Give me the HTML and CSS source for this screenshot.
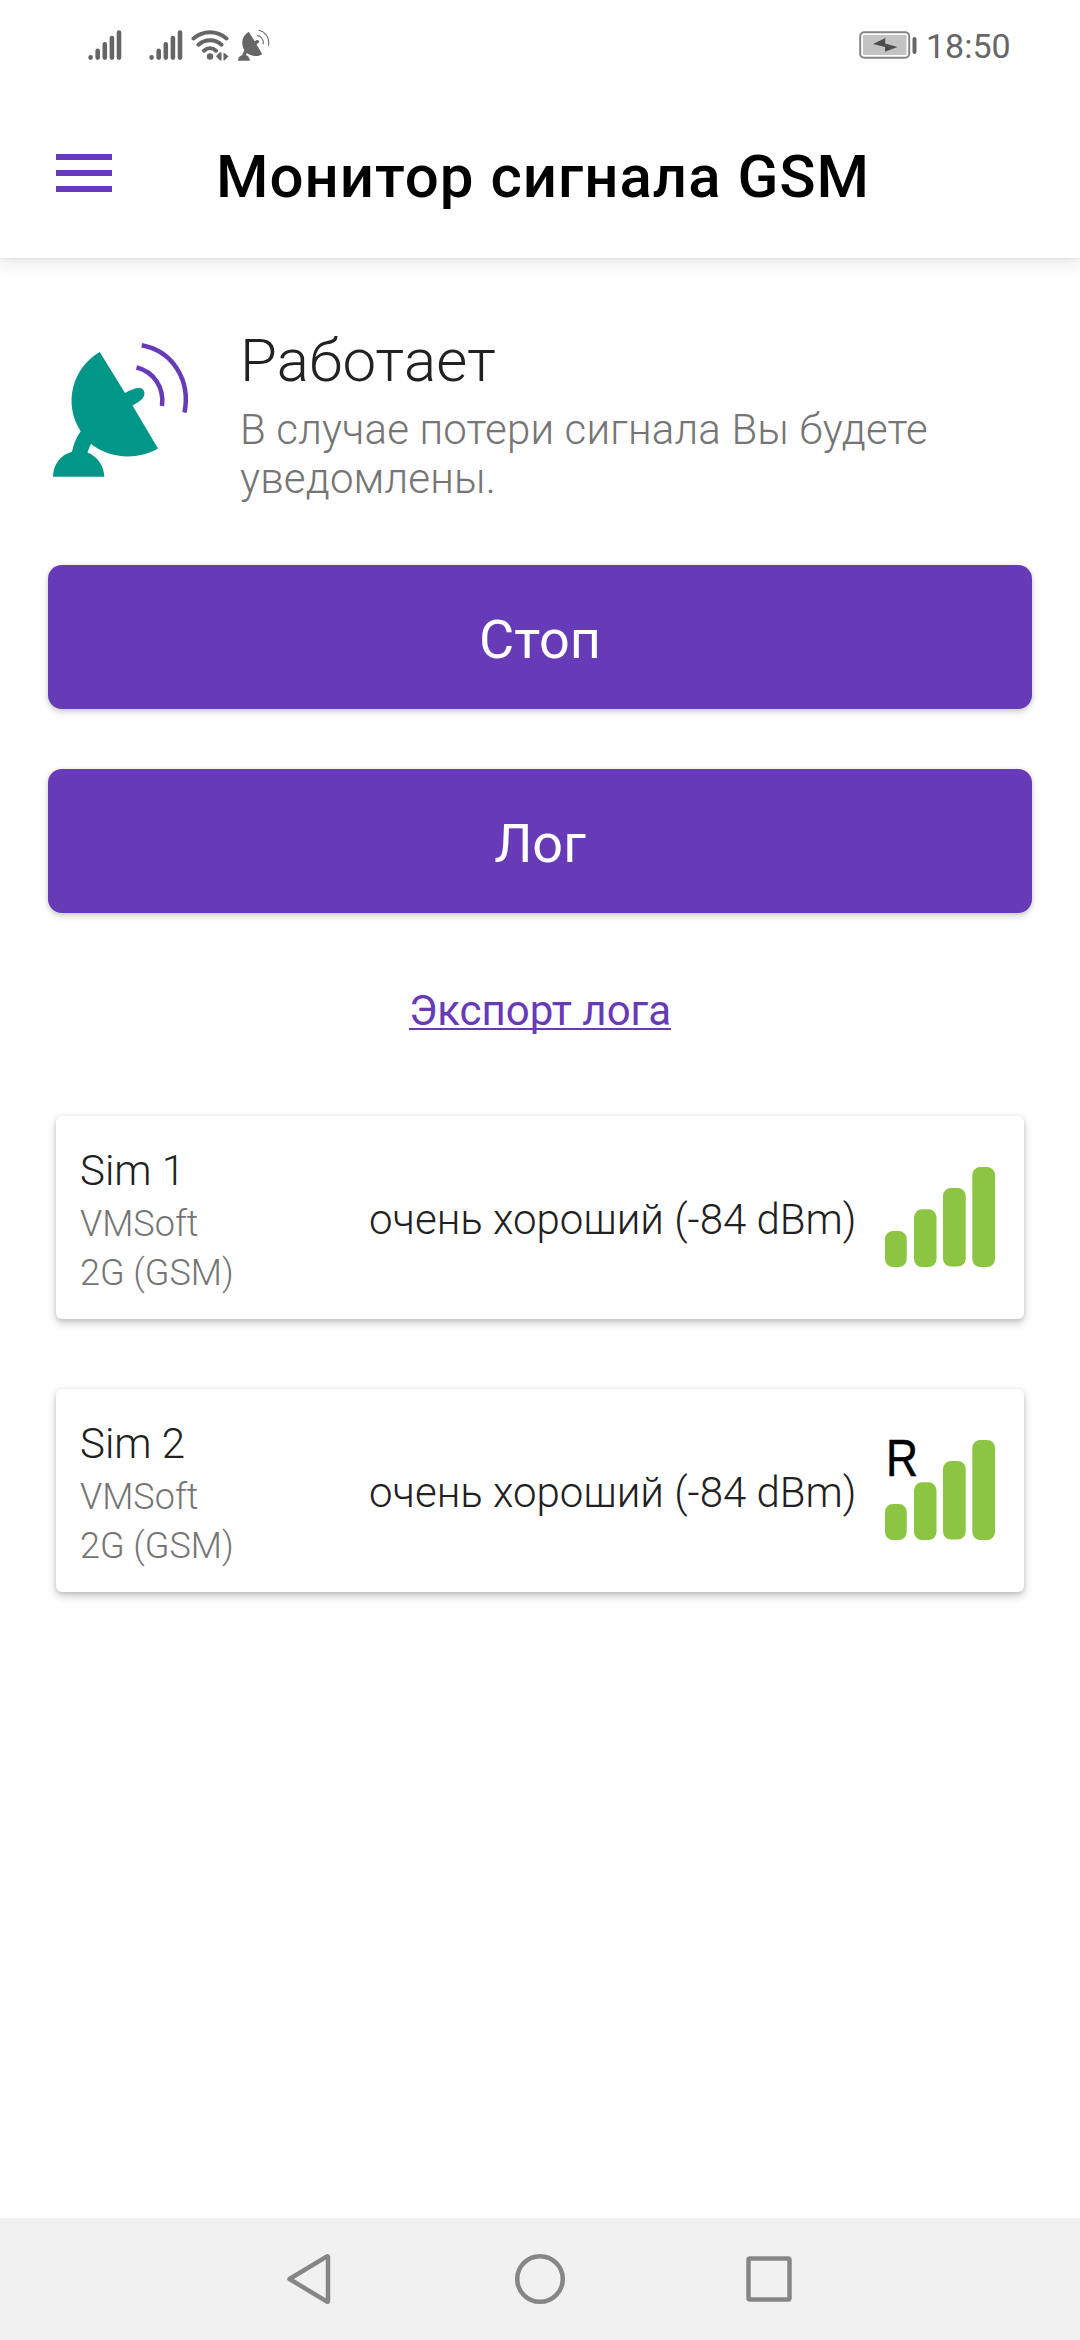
FILE: index.html
```html
<!DOCTYPE html>
<html lang="ru">
<head>
<meta charset="utf-8">
<title>Монитор сигнала GSM</title>
<link rel="stylesheet" href="styles.css">
</head>
<body>
<svg class="defs" width="0" height="0">
  <symbol id="bars" viewBox="0 0 34 32">
    <path d="M2.6 28.2v.4M9.7 21.8v6.8M16.8 15.4v13.2M23.9 9v19.6M31 3.5v25.1" fill="none" stroke="currentColor" stroke-width="4.6" stroke-linecap="round"/>
  </symbol>
  <symbol id="dish" viewBox="0 0 200 180">
    <path d="M69.7 32 95 73c5-3.200 11-5.300 15-5 5 1 6 7 2 11-3 3-6 4.500-9.500 6.500L128 128.500c-23 13-50 9-67-4.500-1.500 3-2.500 5.500-3.500 8.500 10 4 16.500 13 16.800 24.300H23c.3-13 8-22 19-25 1.500-8 4.500-15 8.700-20.600C33 84 42 48 69.700 32Z" fill="currentColor"/>
    <path class="waves" d="M106.500 47.500c17 4 28 20 25.500 38.500M111.700 25.200c32 6 49 36 42.800 67.300" fill="none" stroke-width="4.500"/>
  </symbol>
  <symbol id="signal" viewBox="0 0 110 100">
    <path d="M0 72a8 8 0 0 1 8-8h5.700a8 8 0 0 1 8 8v20a8 8 0 0 1-8 8H8a8 8 0 0 1-8-8ZM29 50.300a8 8 0 0 1 8-8h6.500a8 8 0 0 1 8 8V92a8 8 0 0 1-8 8H37a8 8 0 0 1-8-8ZM58 29a8 8 0 0 1 8-8h6.700a8 8 0 0 1 8 8v62.500a8 8 0 0 1-8 8H66a8 8 0 0 1-8-8ZM87.300 8a8 8 0 0 1 8-8h6.700a8 8 0 0 1 8 8v84a8 8 0 0 1-8 8h-6.700a8 8 0 0 1-8-8Z" fill="#8bc541"/>
  </symbol>
</svg>
<div class="screen">
  <div class="status">
    <svg class="bars"><use href="#bars"/></svg>
    <svg class="bars second"><use href="#bars"/></svg>
    <svg class="wifi" viewBox="0 0 38 32">
      <g fill="none" stroke="currentColor" stroke-width="4" stroke-linecap="round"><path d="M2.500 9.500C12 1.200 26 1.200 35.500 9.500M7.500 15.700c6.500-6 16.500-6 23 0M13 21.700c3.500-3.200 8.500-3.200 12 0"/></g>
      <circle cx="19" cy="27.500" r="3.200" fill="currentColor"/><path d="m25 27.200 4-4h1.500v8.300H29ZM32.500 23.200l5 4-4 4.300h-1Z" fill="currentColor"/>
    </svg>
    <svg class="mini" viewBox="23 20 134 138"><use href="#dish" width="200" height="180"/></svg>
    <svg class="battery" viewBox="0 0 60 30">
      <rect x="1.200" y="2.200" width="49" height="25.500" rx="4" fill="#fff" stroke="#858585" stroke-width="2"/>
      <rect x="4" y="5" width="43.500" height="20" rx="1" fill="#c3c3c3"/>
      <path d="m14 14 12.500-6-.5 5.500L38.500 17 26 21.700V17Z" fill="#4d4d4d"/>
      <rect x="53.500" y="7" width="4" height="17" rx="2" fill="#666"/>
    </svg>
    <span class="time">18:50</span>
  </div>
  <header class="header">
    <div class="menu"><i></i><i></i><i></i></div>
    <h1 class="title">Монитор сигнала GSM</h1>
  </header>
  <main class="main">
    <section class="state">
      <svg class="dish" viewBox="0 0 200 180"><use href="#dish"/></svg>
      <div>
        <h2 class="heading">Работает</h2>
        <p class="note">В случае потери сигнала Вы будете<br>уведомлены.</p>
      </div>
    </section>
    <div class="button">Стоп</div>
    <div class="button">Лог</div>
    <a class="link"><span>Экспорт лога</span></a>
    <section class="card">
      <div class="sim"><b>Sim 1</b><span>VMSoft</span><span>2G (GSM)</span></div>
      <div class="level">очень хороший (-84 dBm)</div>
      <div class="meter"><svg class="signal"><use href="#signal"/></svg></div>
    </section>
    <section class="card">
      <div class="sim"><b>Sim 2</b><span>VMSoft</span><span>2G (GSM)</span></div>
      <div class="level">очень хороший (-84 dBm)</div>
      <div class="meter"><svg class="signal"><use href="#signal"/></svg><span class="roaming">R</span></div>
    </section>
  </main>
  <nav class="nav">
    <svg class="nav-icons" viewBox="0 0 1080 122">
      <g fill="none" stroke="#868686" stroke-width="4.500" stroke-linejoin="round"><path d="M289.500 61 327 38.300q1-.3 1 .7v44q0 1-1 .7Z"/><circle cx="540" cy="61" r="22.800"/><rect x="748.500" y="40.500" width="41" height="41" rx="1.500"/></g>
    </svg>
  </nav>
</div>
</body>
</html>
```
FILE: styles.css
```css
* { box-sizing: border-box; margin: 0; padding: 0; }
body { font-family: Roboto, "Noto Sans", sans-serif; background: #fff; }
.defs { display: block; position: absolute; }
.screen { width: 1080px; height: 2340px; display: flex; flex-direction: column; background: #fefefe; overflow: hidden; }
.status { height: 90px; flex: none; display: flex; align-items: flex-start; padding: 29px 72px 0 88px; color: #666; background: #fff; position: relative; z-index: 1; }
.bars { width: 34px; height: 32px; }
.second { margin-left: 27px; }
.wifi { width: 38px; height: 32px; margin-left: 8px; }
.mini { width: 33px; height: 32px; margin-left: 8px; --wave: #666; }
.waves { stroke: var(--wave, #673ab7); }
.battery { width: 60px; height: 30px; margin: 1px 0 0 auto; }
.time { font-size: 34px; line-height: 40px; margin: -3px 0 0 7px; width: 82px; white-space: nowrap; }
.header { height: 168px; flex: none; display: flex; align-items: flex-start; padding: 64px 0 0 56px; background: #fff; box-shadow: 0 3px 16px rgba(0,0,0,.12), 0 1px 2px rgba(0,0,0,.05); position: relative; }
.menu { width: 56px; display: grid; gap: 10px; margin-right: 104px; }
.menu i { height: 6px; background: #673ab7; }
.title { font-size: 60px; line-height: 70px; font-weight: 500; letter-spacing: 1px; margin-top: -12px; color: #000; white-space: nowrap; }
.main { flex: 1; padding: 62px 48px 0; }
.state { display: flex; height: 245px; }
.dish { width: 200px; height: 180px; margin-left: -18px; color: #009788; flex: none; }
.heading { font-size: 60px; line-height: 70px; font-weight: 300; letter-spacing: .2px; color: #212121; margin: 6px 0 0 10px; }
.note { font-size: 42px; line-height: 49px; font-weight: 300; letter-spacing: .16px; color: #757575; margin: 9px 0 0 10px; white-space: nowrap; }
.button { height: 144px; border-radius: 14px; background: #673ab7; color: #fff; font-size: 54px; line-height: 150px; text-align: center; margin-bottom: 60px; box-shadow: 0 3px 6px rgba(0,0,0,.17), 0 0 5px rgba(0,0,0,.08); }
.link { display: flex; justify-content: center; height: 143px; padding-top: 13px; font-size: 42px; line-height: 49px; color: #673ab7; }
.link span { height: 44px; border-bottom: 2px solid #673ab7; }
.card { height: 203px; margin: 0 8px 70px; border-radius: 6px; background: #fff; box-shadow: 0 4px 8px rgba(0,0,0,.2), 0 1px 4px rgba(0,0,0,.13); display: flex; padding: 0 29px 0 24px; font-weight: 300; color: #212121; }
.sim { width: 289px; padding-top: 30px; display: flex; flex-direction: column; }
.sim b { font-size: 42px; line-height: 49px; font-weight: 300; margin-bottom: 5px; }
.sim span { font-size: 36px; line-height: 49px; color: #757575; }
.level { font-size: 42px; line-height: 49px; padding-top: 79px; white-space: nowrap; }
.meter { position: relative; margin: 51px 0 0 auto; width: 110px; height: 100px; }
.signal { display: block; width: 110px; height: 100px; }
.roaming { position: absolute; left: 1px; top: -7px; font: 400 51px/52px "Liberation Sans", sans-serif; color: #000; -webkit-text-stroke: .5px #000; transform: scaleX(.87); transform-origin: 0 0; }
.nav { height: 122px; flex: none; background: #f1f1f1; }
.nav-icons { display: block; width: 1080px; height: 122px; }
```
